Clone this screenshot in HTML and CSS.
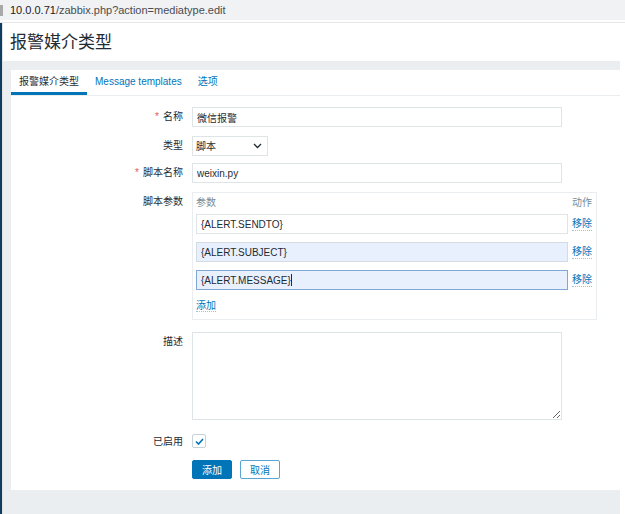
FILE: index.html
```html
<!DOCTYPE html>
<html lang="zh-CN">
<head>
<meta charset="utf-8">
<title>报警媒介类型</title>
<link rel="stylesheet" href="styles.css">
</head>
<body>
<div class="urlbar"><span class="urlbar-mark"></span><span class="url-host">10.0.0.71</span><span class="url-path">/zabbix.php?action=mediatype.edit</span></div>
<div class="app">
  <div class="sidebar-edge"></div>
  <div class="main">
    <header class="page-header"><h1>报警媒介类型</h1></header>
    <div class="content">
      <div class="panel">
        <nav class="tabs">
          <a class="tab active">报警媒介类型</a>
          <a class="tab">Message templates</a>
          <a class="tab">选项</a>
        </nav>
        <form class="form">
          <div class="row row-name">
            <label class="lbl"><span class="req">*</span>名称</label>
            <div class="ctl"><input class="field" value="微信报警"></div>
          </div>
          <div class="row row-type">
            <label class="lbl">类型</label>
            <div class="ctl">
              <div class="select-wrap">
                <select class="select"><option>脚本</option></select>
                <svg class="chevron" width="9" height="6" viewBox="0 0 9 6"><path d="M1 1 L4.5 4.5 L8 1" fill="none" stroke="#1f2c33" stroke-width="1.3"/></svg>
              </div>
            </div>
          </div>
          <div class="row row-script">
            <label class="lbl"><span class="req">*</span>脚本名称</label>
            <div class="ctl"><input class="field" value="weixin.py"></div>
          </div>
          <div class="row row-params">
            <label class="lbl">脚本参数</label>
            <div class="ctl">
              <div class="params">
                <div class="params-head"><span>参数</span><span>动作</span></div>
                <div class="param-row"><input class="field" value="{ALERT.SENDTO}"><a class="link">移除</a></div>
                <div class="param-row"><input class="field autofill" value="{ALERT.SUBJECT}"><a class="link">移除</a></div>
                <div class="param-row"><div class="field autofill focus fake-input">{ALERT.MESSAGE}<span class="caret"></span></div><a class="link">移除</a></div>
                <div class="add-row"><a class="link">添加</a></div>
              </div>
            </div>
          </div>
          <div class="row row-desc">
            <label class="lbl">描述</label>
            <div class="ctl"><textarea class="textarea"></textarea></div>
          </div>
          <div class="row row-check">
            <label class="lbl">已启用</label>
            <div class="ctl">
              <span class="checkbox"><svg width="11" height="11" viewBox="0 0 11 11"><path d="M2 5.5 L4.5 8 L9 3" fill="none" stroke="#0275b8" stroke-width="1.6"/></svg></span>
            </div>
          </div>
          <div class="row row-buttons">
            <span></span>
            <div class="buttons">
              <button type="button" class="btn btn-primary">添加</button>
              <button type="button" class="btn btn-alt">取消</button>
            </div>
          </div>
        </form>
      </div>
    </div>
  </div>
</div>
</body>
</html>
```
FILE: styles.css
```css
body {
  margin: 0;
  width: 625px;
  height: 514px;
  overflow: hidden;
  background: #fff;
  font-family: "Liberation Sans", Arial, "Noto Sans CJK SC", sans-serif;
  font-size: 10px;
  color: #1f2c33;
}

.urlbar {
  height: 20px;
  background: #f1f2f4;
  display: flex;
  align-items: center;
  font-size: 11px;
  border-bottom: 2px solid #fff;
}
.urlbar-mark {
  width: 3px;
  height: 11px;
  background: #a9a9a9;
  margin-right: 7px;
}
.url-host { color: #202124; }
.url-path { color: #4a4d51; }

.app {
  display: flex;
  height: 492px;
  border-top: 1px solid #e4e6e8;
  box-sizing: border-box;
}
.sidebar-edge {
  width: 2px;
  background: #0e3d5f;
  border-right: 1px solid #dfe3e6;
}
.main {
  width: 617px;
  display: flex;
  flex-direction: column;
  background: #ebeef0;
}
.page-header {
  background: #fff;
  height: 38px;
  padding-left: 7px;
  display: flex;
  align-items: center;
}
.page-header h1 {
  margin: 0;
  font-size: 17px;
  font-weight: normal;
  line-height: 20px;
  padding-top: 2px;
}

.content {
  padding: 9px 0 0 8px;
}
.panel {
  background: #fff;
  width: 609px;
  height: 420px;
}

.tabs {
  display: flex;
  height: 25px;
  border-bottom: 1px solid #ebeef0;
}
.tab {
  padding: 0 8px;
  height: 25px;
  line-height: 24px;
  box-sizing: border-box;
  color: #0275b8;
  border-bottom: 3px solid transparent;
}
.tab.active {
  color: #1f2c33;
  border-bottom-color: #0275b8;
}

.form {
  padding-top: 11px;
}
.row {
  display: grid;
  grid-template-columns: 172px 1fr;
  column-gap: 9px;
  margin-bottom: 8px;
}
.row-name { margin-bottom: 9px; }
.row-type { margin-bottom: 7px; }
.row-script { margin-bottom: 9px; }
.row-params { margin-bottom: 12px; }
.row-desc { margin-bottom: 14px; }
.row-check { margin-bottom: 12px; align-items: center; }

.lbl {
  text-align: right;
  line-height: 20px;
}
.row-check .lbl { line-height: 13px; }
.req {
  color: #e45959;
  margin-right: 4px;
}

.field {
  display: block;
  width: 370px;
  height: 20px;
  margin: 0;
  box-sizing: border-box;
  border: 1px solid #dfe4e7;
  padding: 0 4px;
  font: inherit;
  color: inherit;
  background: #fff;
  outline: none;
}
.fake-input {
  display: flex;
  align-items: center;
}
.caret {
  width: 1px;
  height: 12px;
  background: #1f2c33;
}

.select-wrap {
  position: relative;
  width: 76px;
}
.select {
  display: block;
  width: 76px;
  height: 20px;
  box-sizing: border-box;
  border: 1px solid #dfe4e7;
  padding: 0 3px;
  font: inherit;
  color: inherit;
  background: #fff;
  appearance: none;
  -webkit-appearance: none;
  outline: none;
}
.chevron {
  position: absolute;
  right: 6px;
  top: 7px;
  pointer-events: none;
}

.params {
  width: 405px;
  box-sizing: border-box;
  border: 1px solid #ebeef0;
  padding: 2px 4px 5px 3px;
}
.params-head {
  display: flex;
  justify-content: space-between;
  line-height: 16px;
  color: #768d99;
  margin-bottom: 3px;
}
.param-row {
  display: flex;
  align-items: center;
  gap: 4px;
  margin-bottom: 8px;
}
.param-row .field { width: 372px; }
.field.autofill { background: #e8f0fe; border-color: #d3dce3; }
.field.focus { border-color: #7fa9d4; }
.add-row { line-height: 16px; }
.link {
  color: #0275b8;
  text-decoration: none;
  border-bottom: 1px dotted #9cc6e0;
  line-height: 13px;
}

.textarea {
  display: block;
  width: 370px;
  height: 88px;
  margin: 0;
  box-sizing: border-box;
  border: 1px solid #dfe4e7;
  font: inherit;
  outline: none;
}

.checkbox {
  width: 14px;
  height: 14px;
  box-sizing: border-box;
  border: 1px solid #c6d1d8;
  border-radius: 2px;
  display: flex;
  align-items: center;
  justify-content: center;
  background: #fff;
}

.buttons {
  display: flex;
  gap: 8px;
}
.btn {
  width: 40px;
  height: 19px;
  padding: 0;
  font: inherit;
  border-radius: 2px;
  border: 1px solid #0275b8;
}
.btn-primary {
  background: #0275b8;
  color: #fff;
}
.btn-alt {
  background: #fff;
  color: #0275b8;
  border-color: #5aa3d5;
}
```
